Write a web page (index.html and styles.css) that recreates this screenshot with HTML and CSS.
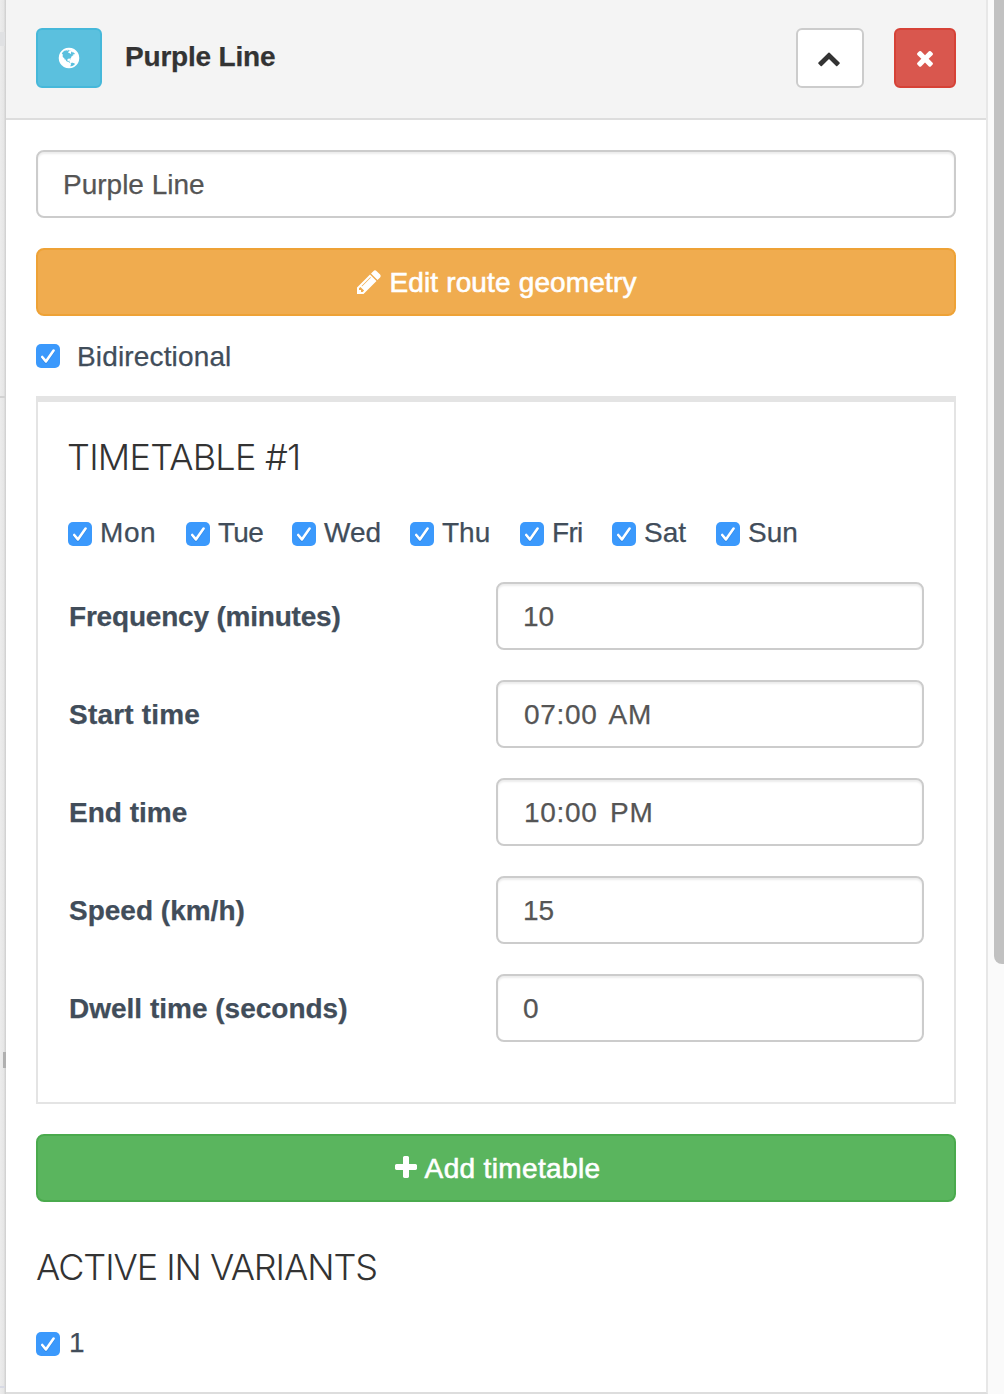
FILE: index.html
```html
<!DOCTYPE html>
<html lang="en">
<head>
<meta charset="utf-8">
<title>Purple Line</title>
<link rel="stylesheet" href="styles.css">
</head>
<body>
<svg class="defs" aria-hidden="true">
  <symbol id="check" viewBox="0 0 24 24"><path d="M6.2 13l3.7 4.4L17.6 6.600" fill="none" stroke="#1b6fc4" stroke-opacity=".45" stroke-width="2.600" stroke-linecap="round" stroke-linejoin="round" transform="translate(0 1)"/><path d="M6.200 13l3.700 4.400L17.600 6.600" fill="none" stroke="#fff" stroke-width="2.600" stroke-linecap="round" stroke-linejoin="round"/></symbol>
</svg>
<div class="app">
  <div class="map"><i class="road road-a"></i><i class="road road-b"></i><i class="road road-c"></i><i class="road road-d"></i></div>
  <main class="panel">
    <header class="head">
      <button class="btn btn-info"><svg class="icon" viewBox="0 0 1792 1792"><path d="M896 128q209 0 385.500 103t279.500 279.500 103 385.500-103 385.500-279.500 279.500-385.500 103-385.500-103-279.500-279.500-103-385.500 103-385.500 279.500-279.500 385.500-103zm274 521q-2 1-9.500 9.500t-13.500 9.500q2 0 4.500-5t5-11 3.500-7q6-7 22-15 14-6 52-12 34-8 51 11-2-2 9.500-13t14.500-12q3-2 15-4.500t15-7.500l2-22q-12 1-17.500-7t-6.500-21q0 2-6 8 0-7-4.500-8t-11.500 1-9 1q-10-3-15-7.500t-8-16.500-4-15q-2-5-9.500-11t-9.500-10q-1-2-2.500-5.500t-3-6.500-4-5.500-5.500-2.500-7 5-7.500 10-4.500 5q-3-2-6-1.500t-4.500 1-4.500 3-5 3.500q-3 2-8.500 3t-8.500 2q15-5-1-11-10-4-16-3 9-4 7.500-12t-8.500-14h5q-1-4-8.500-8.500t-17.500-8.500-13-6q-8-5-34-9.500t-33-.5q-5 6-4.500 10.500t4 14 3.500 12.500q1 6-5.500 13t-6.500 12q0 7 14 15.500t10 21.500q-3 8-16 16t-16 12q-5 8-1.500 18.500t10.500 16.500q2 2 1.500 4t-3.500 4.500-5.500 4-6.500 3.500l-3 2q-11 5-20.500-6t-13.500-26q-7-25-16-30-23-8-29 1-5-13-41-26-25-9-58-4 6-1 0-15-7-15-19-12 3-6 4-17.500t1-13.500q3-13 12-23 1-1 7-8.500t9.500-13.500.5-6q35 4 50-11 5-5 11.500-17t10.500-17q9-6 14-5.500t14.500 5.500 14.500 5q14 1 15.500-11t-7.500-20q12 1 3-17-4-7-8-9-12-4-27 5-8 4 2 8-1-1-9.500 10.500t-16.500 17.500-16-5q-1-1-5.500-13.500t-9.500-13.500q-8 0-16 15 3-8-11-15t-24-8q19-12-8-27-7-4-20.500-5t-19.500 4q-5 7-5.500 11.500t5 8 10.500 5.500 11.500 4 8.500 3q14 10 8 14-2 1-8.500 3.500t-11.500 4.500-6 4q-3 4 0 14t-2 14q-5-5-9-17.500t-7-16.500q7 9-25 6l-10-1q-4 0-16 2t-20.500 1-13.500-8q-4-8 0-20 1-4 4-2-4-3-11-9.500t-10-8.500q-46 15-94 41 6 1 12-1 5-2 13-6.500t10-5.500q34-14 42-7l5-5q14 16 20 25-7-4-30-1-20 6-22 12 7 12 5 18-4-3-11.500-10t-14.500-11-15-5q-16 0-22 1-146 80-235 222 7 7 12 8 4 1 5 9t2.500 11 11.500-3q9 8 3 19 1-1 44 27 19 17 21 21 3 11-10 18-1-2-9-9t-9-4q-3 5 .5 18.500t10.500 12.500q-7 0-9.500 16t-2.500 35.500-1 23.500l2 1q-3 12 5.500 34.500t21.500 19.500q-13 3 20 43 6 8 8 9 3 2 12 7.500t15 10 10 10.500q4 5 10 22.500t14 23.500q-2 6 9.500 20t10.500 23q-1 0-2.500 1t-2.500 1q3 7 15.500 14t15.500 13q1 3 2 10t3 11 8 2q2-20-24-62-15-25-17-29-3-5-5.500-15.500t-4.500-14.500q2 0 6 1.500t8.500 3.500 7.500 4 2 3q-3 7 2 17.500t12 18.500 17 19 12 13q6 6 14 19.500t0 13.500q9 0 20 10t17 20q5 8 8 26t5 24q2 7 8.500 13.500t12.500 9.500l16 8 13 7q5 2 18.500 10.500t21.500 11.500q10 4 16 4t14.500-2.500 13.500-3.500q15-2 29 15t21 21q36 19 55 11-2 1 .5 7.500t8 15.500 9 14.500 5.500 8.500q5 6 18 15t18 15q6-4 7-9-3 8 7 20t18 10q14-3 14-32-31 15-49-18 0-1-2.500-5.500t-4-8.500-2.500-8.500 0-7.500 5-3q9 0 10-3.500t-2-12.500-4-13q-1-8-11-20t-12-15q-5 9-16 8t-16-9q0 1-1.500 5.500t-1.500 6.500q-13 0-15-1 1-3 2.500-17.500t3.500-22.500q1-4 5.500-12t7.500-14.500 4-12.500-4.500-9.500-17.500-2.500q-19 1-26 20-1 3-3 10.500t-5 11.500-9 7q-7 3-24 2t-24-5q-13-8-22.500-29t-9.500-37q0-10 2.500-26.500t3-25-5.500-24.500q3-2 9-9.500t10-10.500q2-1 4.500-1.500t4.500 0 4-1.500 3-6q-1-1-4-3-3-3-4-3 7 3 28.500-1.500t27.500 1.500q15 11 22-2 0-1-2.500-9.500t-.5-13.500q5 27 29 9 3 3 15.500 5t17.500 5q3 2 7 5.500t5.500 4.500 5-.5 8.500-6.500q10 14 12 24 11 40 19 44 7 3 11 2t4.500-9.500 0-14-1.500-12.500l-1-8v-18l-1-8q-15-3-18.500-12t1.500-18.500 15-18.500q1-1 8-3.500t15.500-6.500 12.500-8q21-19 15-35 7 0 11-9-1 0-5-3t-7.500-5-4.500-2q9-5 2-16 5-3 7.500-11t7.500-10q9 12 21 2 7-8 1-16 5-7 20.500-10.500t18.500-9.500q7 2 8-2t1-12 3-12q4-5 15-9t13-5l17-11q3-4 0-4 18 2 31-11 10-11-6-20 3-6-3-9.500t-15-5.500q3-1 11.500-.5t10.500-1.500q15-10-7-16-17-5-43 12zm-163 877q206-36 351-189-3-3-12.500-4.500t-12.500-3.500q-18-7-24-8 1-7-2.500-13t-8-9-12.500-8-11-7q-2-2-7-6t-7-5.500-7.500-4.500-8.500-2-10 1l-3 1q-3 1-5.500 2.500t-5.500 3-4 3 0 2.500q-21-17-36-22-5-1-11-5.500t-10.500-7-10-1.500-11.500 7q-5 5-6 15t-2 13q-7-5 0-17.500t2-18.500q-3-6-10.500-4.500t-12 4.500-11.500 8.500-9 6.500-8.500 5.500-8.500 7.500q-3 4-6 12t-5 11q-2-4-11.500-6.500t-9.500-5.500q2 10 4 35t5 38q7 31-12 48-27 25-29 40-4 22 12 26 0 7-8 20.500t-7 21.500q0 6 2 16z"/></svg></button>
      <h1 class="title">Purple Line</h1>
      <button class="btn btn-default"><svg class="icon" viewBox="0 0 1792 1792"><path d="M1683 1331l-166 165q-19 19-45 19t-45-19l-531-531-531 531q-19 19-45 19t-45-19l-166-165q-19-19-19-45.500t19-45.500l742-741q19-19 45-19t45 19l742 741q19 19 19 45.500t-19 45.500z"/></svg></button>
      <button class="btn btn-danger"><svg class="icon" viewBox="0 0 1792 1792"><path d="M1490 1322q0 40-28 68l-136 136q-28 28-68 28t-68-28l-294-294-294 294q-28 28-68 28t-68-28l-136-136q-28-28-28-68t28-68l294-294-294-294q-28-28-28-68t28-68l136-136q28-28 68-28t68 28l294 294 294-294q28-28 68-28t68 28l136 136q28 28 28 68t-28 68l-294 294 294 294q28 28 28 68z"/></svg></button>
    </header>
    <div class="body">
      <div class="control name">Purple Line</div>
      <button class="btn block btn-warning"><svg class="icon icon-lg" viewBox="0 0 1792 1792"><path d="M491 1536l91-91-235-235-91 91v107h128v128h107zm523-928q0-22-22-22-10 0-17 7l-542 542q-7 7-7 17 0 22 22 22 10 0 17-7l542-542q7-7 7-17zm-54-192l416 416-832 832h-416v-416zm683 96q0 53-37 90l-166 166-416-416 166-165q36-38 90-38 53 0 91 38l235 234q37 39 37 91z"/></svg><span class="edit-label">Edit route geometry</span></button>
      <label class="check bidi"><svg class="box"><use href="#check"/></svg><span>Bidirectional</span></label>
      <section class="timetable">
        <h2 class="heading">TIMETABLE #1</h2>
        <div class="days">
          <label class="check"><svg class="box"><use href="#check"/></svg><span class="loose">Mon</span></label>
          <label class="check"><svg class="box"><use href="#check"/></svg><span class="tight">Tue</span></label>
          <label class="check"><svg class="box"><use href="#check"/></svg><span>Wed</span></label>
          <label class="check"><svg class="box"><use href="#check"/></svg><span>Thu</span></label>
          <label class="check"><svg class="box"><use href="#check"/></svg><span class="tight">Fri</span></label>
          <label class="check"><svg class="box"><use href="#check"/></svg><span>Sat</span></label>
          <label class="check"><svg class="box"><use href="#check"/></svg><span>Sun</span></label>
        </div>
        <div class="fields">
          <div class="field"><span class="label label-snug">Frequency (minutes)</span><div class="control">10</div></div>
          <div class="field"><span class="label label-wide">Start time</span><div class="control time">07:00 AM</div></div>
          <div class="field"><span class="label">End time</span><div class="control time">10:00 PM</div></div>
          <div class="field"><span class="label">Speed (km/h)</span><div class="control">15</div></div>
          <div class="field"><span class="label">Dwell time (seconds)</span><div class="control">0</div></div>
        </div>
      </section>
      <button class="btn block btn-success"><svg class="icon icon-lg" viewBox="0 0 1792 1792"><path d="M1600 736v192q0 40-28 68t-68 28h-416v416q0 40-28 68t-68 28h-192q-40 0-68-28t-28-68v-416h-416q-40 0-68-28t-28-68v-192q0-40 28-68t68-28h416v-416q0-40 28-68t68-28h192q40 0 68 28t28 68v416h416q40 0 68 28t28 68z"/></svg><span class="add-label">Add timetable</span></button>
      <h2 class="heading variants">ACTIVE IN VARIANTS</h2>
      <label class="check variant"><svg class="box"><use href="#check"/></svg><span>1</span></label>
    </div>
  </main>
  <div class="track"><div class="thumb"></div></div>
</div>
</body>
</html>
```
FILE: styles.css
```css
* { box-sizing: border-box; }
body {
  margin: 0;
  font: 28px/40px "Liberation Sans", Arial, sans-serif;
  color: #414d5a;
  background: #fff;
  -webkit-text-stroke: .25px currentColor;
}
.defs { display: none; }
.app { display: grid; grid-template-columns: 6px 982px 16px; height: 1394px; overflow: hidden; }
.map { position: relative; background: linear-gradient(90deg, #ececec, #e6e6e6 60%, #cdcdcd); }
.road { position: absolute; left: 0; width: 5px; height: 2px; background: #d2d2d2; }
.road-a { top: 32px; height: 14px; background: #e0e1e3; }
.road-b { top: 396px; }
.road-c { top: 1052px; left: 3px; width: 3px; height: 16px; background: #b0b0b0; }
.road-d { top: 1386px; background: #d8dae4; }
.panel { border-right: 2px solid #e7e7e7; border-bottom: 2px solid #ddd; }
.head {
  display: flex;
  align-items: flex-start;
  height: 120px;
  padding: 28px 30px 0;
  background: #f4f4f4;
  border-bottom: 2px solid #ddd;
}
.title {
  flex: 1;
  margin: 9px 0 0 23px;
  font-size: 28px;
  line-height: 40px;
  letter-spacing: -.2px;
  color: #333;
}
.btn {
  display: flex;
  align-items: center;
  justify-content: center;
  height: 60px;
  padding: 0;
  border: 2px solid;
  border-radius: 6px;
  font: inherit;
  color: #fff;
}
.btn-info { width: 66px; background: #5bc0de; border-color: #46b8da; }
.btn-default { width: 68px; margin-right: 30px; background: #fff; border-color: #ccc; color: #333; }
.btn-danger { width: 62px; background: #d9574e; border-color: #d64237; }
.icon { flex: none; width: 24px; height: 24px; fill: currentColor; }
.btn-info .icon { margin: 0 1px 1px 0; }
.btn-default .icon { margin: 0 2px 1px 0; }
.btn-danger .icon { margin: 0 1px 1px 0; }
.btn .icon-lg { width: 28px; height: 28px; }
.body { padding: 30px 30px 0; }
.control {
  height: 68px;
  padding: 13px 25px 0;
  border: 2px solid #ccc;
  border-radius: 8px;
  background: #fff;
  box-shadow: inset 0 2px 2px rgba(0, 0, 0, .075);
  color: #555;
}
.time { padding-left: 26px; letter-spacing: .7px; word-spacing: 4px; }
.block { width: 100%; height: 68px; border-radius: 8px; -webkit-text-stroke: .6px #fff; }
.block span { margin-top: 2px; }
.edit-label { margin-left: 6px; letter-spacing: .15px; }
.add-label { margin-left: 5px; letter-spacing: .35px; }
.name { margin-bottom: 30px; }
.btn-warning { background: #f0ac4f; border-color: #eea236; }
.btn-success { background: #5ab55e; border-color: #4aaa4d; }
.check { display: flex; align-items: center; gap: 9px; height: 40px; }
.box { flex: none; width: 24px; height: 24px; border-radius: 5px; background: #3b99fc; }
.bidi { margin: 20px 0; gap: 17px; }
.bidi span { margin-top: 2px; letter-spacing: .15px; }
.timetable { height: 708px; padding: 30px 30px 0; border: 2px solid #e4e4e4; border-top-width: 6px; }
.heading {
  margin: 0 0 0 -1px;
  font: 300 36px/50px Inter, sans-serif;
  letter-spacing: -.75px;
  color: #333;
  -webkit-text-stroke: 0;
}
.days { display: grid; grid-template-columns: 118px 106px 118px 110px 92px 104px 1fr; margin: 31px 0 29px; }
.days .box, .variant .box { margin-top: 2px; }
.days .check { gap: 8px; }
.tight { letter-spacing: -.7px; }
.loose { letter-spacing: .6px; }
.fields { display: grid; gap: 30px; }
.field { display: grid; grid-template-columns: 1fr 428px; align-items: center; }
.label { padding: 2px 0 0 1px; font-weight: bold; letter-spacing: 0; }
.label-snug { letter-spacing: -.2px; }
.label-wide { letter-spacing: .2px; }
.btn-success { margin-top: 30px; }
.variants { margin: 40px 0 31px; letter-spacing: -1.05px; }
.track { padding-left: 6px; background: #fafafa; }
.thumb { height: 964px; background: #c1c1c1; border-bottom-left-radius: 8px; }
```
